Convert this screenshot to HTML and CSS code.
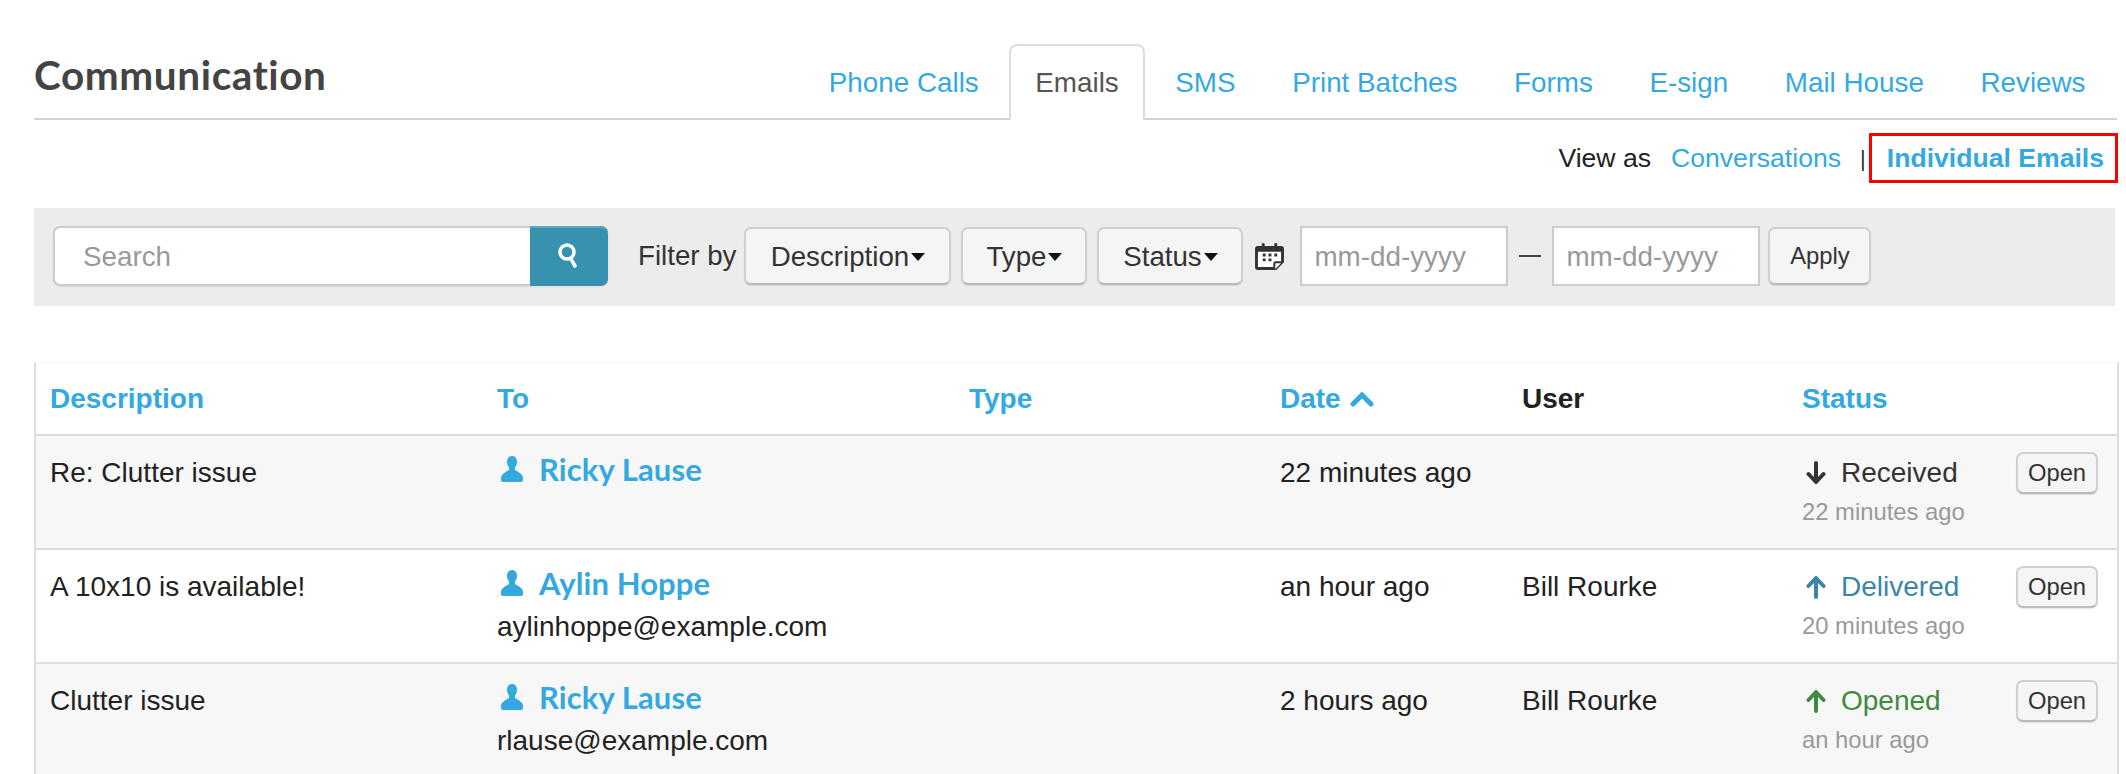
FILE: index.html
```html
<!DOCTYPE html>
<html lang="en">
<head>
<meta charset="utf-8">
<title>Communication</title>
<link rel="stylesheet" href="styles.css">
</head>
<body>
<div class="page">
  <header class="head">
    <h1 class="title">Communication</h1>
    <nav class="tabs">
      <a class="tab">Phone Calls</a>
      <a class="tab tab-active">Emails</a>
      <a class="tab">SMS</a>
      <a class="tab">Print Batches</a>
      <a class="tab">Forms</a>
      <a class="tab">E-sign</a>
      <a class="tab">Mail House</a>
      <a class="tab">Reviews</a>
    </nav>
  </header>

  <div class="view-row">
    <span class="view-label">View as</span>
    <a class="view-link">Conversations</a>
    <span class="view-sep">|</span>
    <a class="view-current">Individual Emails</a>
  </div>

  <div class="filter-bar">
    <div class="search">
      <input class="search-input" type="text" placeholder="Search">
      <button class="search-btn" type="button" aria-label="Search">
        <svg class="search-icon" viewBox="0 0 24 28" width="24" height="28"><circle cx="11" cy="10" r="7" fill="none" stroke="#fff" stroke-width="3.4"/><path d="M15 17l4 7" fill="none" stroke="#fff" stroke-width="3.6" stroke-linecap="round"/></svg>
      </button>
    </div>
    <span class="filter-label">Filter by</span>
    <button class="btn btn-desc" type="button">Description<i class="caret"></i></button>
    <button class="btn btn-type" type="button">Type<i class="caret"></i></button>
    <button class="btn btn-status" type="button">Status<i class="caret"></i></button>
    <svg class="cal-icon" viewBox="0 0 30 28" width="29" height="27">
      <path fill="#333" d="M3 3h4V1.500a1.500 1.500 0 0 1 3 0V3h10V1.500a1.500 1.500 0 0 1 3 0V3h4a3 3 0 0 1 3 3v14l-8 8H3a3 3 0 0 1-3-3V6a3 3 0 0 1 3-3z"/>
      <path fill="#fff" d="M3 9h24v10h-6a2 2 0 0 0-2 2v4H3z"/>
      <path fill="#333" d="M8 11h3v3H8zM14 11h3v3h-3zM20 11h3v3h-3zM8 16h3v3H8zM14 16h3v3h-3z"/>
      <path fill="#fff" d="M21 21h6l-6 6z"/>
    </svg>
    <input class="date-input" type="text" placeholder="mm-dd-yyyy">
    <span class="dash"></span>
    <input class="date-input" type="text" placeholder="mm-dd-yyyy">
    <button class="btn btn-apply" type="button">Apply</button>
  </div>

  <table class="grid">
    <colgroup>
      <col class="c1"><col class="c2"><col class="c3"><col class="c4"><col class="c5"><col class="c6">
    </colgroup>
    <thead>
      <tr>
        <th class="sort">Description</th>
        <th class="sort">To</th>
        <th class="sort">Type</th>
        <th class="sort">Date <svg class="chev" viewBox="0 0 24 16" width="24" height="16"><path d="M3 13l9-9 9 9" fill="none" stroke="#34a9e1" stroke-width="5" stroke-linecap="round"/></svg></th>
        <th>User</th>
        <th class="sort">Status</th>
      </tr>
    </thead>
    <tbody>
      <tr class="odd">
        <td>Re: Clutter issue</td>
        <td>
          <a class="person"><svg class="person-icon" viewBox="0 0 22 26" width="22" height="26"><path fill="#34a9e1" d="M11 0c3.100 0 5 2.400 5 5.800 0 2.500-1 4.600-2 5.800V14c1.500 1.100 3 1.600 4.500 2.700 2.200 1.500 3.500 3 3.500 5.300v2a2 2 0 0 1-2 2H2a2 2 0 0 1-2-2v-2c0-2.300 1.300-3.800 3.500-5.300C5 15.600 6.500 15.100 8 14v-2.400c-1-1.200-2-3.300-2-5.800C6 2.400 7.900 0 11 0z"/></svg><span class="person-name">Ricky Lause</span></a>
        </td>
        <td></td>
        <td>22 minutes ago</td>
        <td></td>
        <td>
          <div class="status-cell">
            <div class="status-text">
              <div class="state state-in"><svg class="arrow" viewBox="0 0 20 24" width="20" height="24"><path d="M10 2v19M2.500 13l7.500 8 7.500-8" fill="none" stroke="currentColor" stroke-width="4" stroke-linecap="round" stroke-linejoin="round"/></svg>Received</div>
              <div class="when">22 minutes ago</div>
            </div>
            <button class="btn btn-open" type="button">Open</button>
          </div>
        </td>
      </tr>
      <tr>
        <td>A 10x10 is available!</td>
        <td>
          <a class="person"><svg class="person-icon" viewBox="0 0 22 26" width="22" height="26"><path fill="#34a9e1" d="M11 0c3.100 0 5 2.400 5 5.800 0 2.500-1 4.600-2 5.800V14c1.500 1.100 3 1.600 4.500 2.700 2.200 1.500 3.500 3 3.500 5.300v2a2 2 0 0 1-2 2H2a2 2 0 0 1-2-2v-2c0-2.300 1.300-3.800 3.500-5.300C5 15.600 6.500 15.100 8 14v-2.400c-1-1.200-2-3.300-2-5.800C6 2.400 7.900 0 11 0z"/></svg><span class="person-name">Aylin Hoppe</span></a>
          <div class="email">aylinhoppe@example.com</div>
        </td>
        <td></td>
        <td>an hour ago</td>
        <td>Bill Rourke</td>
        <td>
          <div class="status-cell">
            <div class="status-text">
              <div class="state state-delivered"><svg class="arrow" viewBox="0 0 20 24" width="20" height="24"><path d="M10 22V3M2.500 11L10 3l7.500 8" fill="none" stroke="currentColor" stroke-width="4" stroke-linecap="round" stroke-linejoin="round"/></svg>Delivered</div>
              <div class="when">20 minutes ago</div>
            </div>
            <button class="btn btn-open" type="button">Open</button>
          </div>
        </td>
      </tr>
      <tr class="odd">
        <td>Clutter issue</td>
        <td>
          <a class="person"><svg class="person-icon" viewBox="0 0 22 26" width="22" height="26"><path fill="#34a9e1" d="M11 0c3.100 0 5 2.400 5 5.800 0 2.500-1 4.600-2 5.800V14c1.500 1.100 3 1.600 4.500 2.700 2.200 1.500 3.500 3 3.500 5.300v2a2 2 0 0 1-2 2H2a2 2 0 0 1-2-2v-2c0-2.300 1.300-3.800 3.500-5.300C5 15.600 6.500 15.100 8 14v-2.400c-1-1.200-2-3.300-2-5.800C6 2.400 7.900 0 11 0z"/></svg><span class="person-name">Ricky Lause</span></a>
          <div class="email">rlause@example.com</div>
        </td>
        <td></td>
        <td>2 hours ago</td>
        <td>Bill Rourke</td>
        <td>
          <div class="status-cell">
            <div class="status-text">
              <div class="state state-opened"><svg class="arrow" viewBox="0 0 20 24" width="20" height="24"><path d="M10 22V3M2.500 11L10 3l7.500 8" fill="none" stroke="currentColor" stroke-width="4" stroke-linecap="round" stroke-linejoin="round"/></svg>Opened</div>
              <div class="when">an hour ago</div>
            </div>
            <button class="btn btn-open" type="button">Open</button>
          </div>
        </td>
      </tr>
    </tbody>
  </table>
</div>
</body>
</html>
```
FILE: styles.css
```css
* { box-sizing: border-box; }
html, body { margin: 0; padding: 0; background: #fff; }
body {
  font-family: "Liberation Sans", Arial, sans-serif;
  font-size: 28px;
  color: #333;
}
a { color: #34a9e1; text-decoration: none; }
.page {
  height: 774px;
  overflow: hidden;
  padding: 0 9px 0 34px;
}

/* Header and tabs */
.head {
  display: flex;
  justify-content: space-between;
  align-items: flex-end;
  height: 120px;
  border-bottom: 2px solid #d2d2d2;
}
.title {
  margin: 0;
  align-self: flex-start;
  padding-top: 53px;
  font-family: Lato, "Liberation Sans", sans-serif;
  font-variant-ligatures: none;
  font-weight: 700;
  font-size: 40.5px;
  letter-spacing: .6px;
  line-height: 44px;
  color: #444;
}
.tabs {
  display: flex;
  gap: 3.6px;
  margin-bottom: -2px;
  padding-right: 5px;
}
.tab {
  display: block;
  height: 76px;
  padding: 0 24.5px;
  border: 2px solid transparent;
  border-bottom: 0;
  font-size: 27.8px;
  line-height: 74px;
}
.tab-active {
  color: #555;
  background: #fff;
  border-color: #ddd;
  border-radius: 8px 8px 0 0;
}

/* View as */
.view-row {
  display: flex;
  justify-content: flex-end;
  align-items: flex-start;
  height: 88px;
  padding-top: 13px;
  margin-right: -1px;
  font-size: 26.6px;
  line-height: 51px;
}
.view-label { margin-right: 20px; color: #222; }
.view-sep { margin: 0 3px 0 19px; font-size: 22px; line-height: 51px; }
.view-current {
  display: block;
  height: 50px;
  padding: 0 11px 0 15px;
  border: 3px solid #f00;
  color: #34a9e1;
  font-weight: 700;
  line-height: 45px;
}

/* Filter bar */
.filter-bar {
  display: flex;
  align-items: center;
  height: 98px;
  padding: 0 19px 2px;
  margin-right: 2px;
  background: #ececec;
  font-size: 27.7px;
}
.search {
  display: flex;
  width: 555px;
  height: 60px;
  flex: none;
  border-radius: 7px;
  box-shadow: 0 1px 2px rgba(0, 0, 0, .08);
}
.search-input {
  flex: 1;
  min-width: 0;
  height: 60px;
  padding: 2px 0 0 28px;
  border: 2px solid #ccc;
  border-right: 0;
  border-radius: 7px 0 0 7px;
  outline: 0;
  background: #fff;
  font: inherit;
  font-size: 27.8px;
}
.search-btn {
  display: flex;
  align-items: center;
  justify-content: center;
  width: 78px;
  height: 60px;
  padding: 0;
  border: 0;
  border-radius: 0 7px 7px 0;
  background: #3792b0;
  box-shadow: inset 0 2px 0 #5ba7c1;
}
.search-icon { flex: none; margin-left: -2px; }
input::placeholder { color: #999; opacity: 1; }

.filter-label { margin-left: 30px; margin-right: 8px; color: #333; }
.btn {
  display: block;
  height: 58px;
  flex: none;
  padding: 2px 0 0;
  border: 2px solid #d0d0d0;
  border-bottom-color: #bbb;
  border-radius: 7px;
  background: #f5f5f5;
  color: #333;
  font: inherit;
  box-shadow: 0 1px 1px rgba(0, 0, 0, .1);
}
.btn-desc { width: 207px; }
.btn-type { width: 126px; margin-left: 10px; }
.btn-status { width: 146px; margin-left: 10px; }
.caret {
  display: inline-block;
  margin-left: 2px;
  vertical-align: 5px;
  border-style: solid;
  border-width: 8px 7.5px 0;
  border-color: #111 transparent transparent;
}
.cal-icon { flex: none; margin-left: 12px; margin-right: 16px; }
.date-input {
  width: 208px;
  height: 60px;
  flex: none;
  padding: 2px 0 0 12px;
  border: 2px solid #ccc;
  outline: 0;
  background: #fff;
  font: inherit;
  font-size: 27.8px;
}
.dash {
  flex: none;
  width: 22px;
  height: 2px;
  margin: 0 11px;
  background: #444;
}
.btn-apply {
  width: 103px;
  margin-left: 8px;
  padding-top: 0;
  font-size: 23.8px;
}

/* Table */
.grid {
  width: 2083px;
  margin-top: 56px;
  table-layout: fixed;
  border-collapse: separate;
  border-spacing: 0;
  border-top: 1px solid #f6f6f6;
  border-left: 2px solid #ddd;
  border-right: 2px solid #ddd;
}
.c1 { width: 447px; }
.c2 { width: 472px; }
.c3 { width: 311px; }
.c4 { width: 242px; }
.c5 { width: 280px; }
.c6 { width: 329px; }
th {
  height: 71px;
  padding: 1px 0 0 14px;
  text-align: left;
  font-weight: 700;
  color: #222;
}
th.sort { color: #34a9e1; }
.chev { margin-left: 2px; vertical-align: 1px; }
td {
  height: 114px;
  padding: 18px 0 0 14px;
  border-top: 2px solid #ddd;
  vertical-align: top;
  line-height: 38px;
  color: #222;
}
.odd td { background: #f7f7f7; }
.person { display: flex; align-items: center; height: 34px; margin-top: -2px; }
.person-icon { flex: none; margin-left: 4px; margin-right: 16px; }
.person-name {
  font-family: Lato, "Liberation Sans", sans-serif;
  font-variant-ligatures: none;
  font-weight: 700;
  font-size: 31px;
  letter-spacing: .1px;
  color: #34a9e1;
}
.email { margin-top: 8px; }
.status-cell { display: flex; justify-content: space-between; padding-right: 19px; }
.status-text { min-width: 0; }
.state { display: flex; align-items: center; height: 38px; }
.arrow { flex: none; margin-left: 4px; margin-right: 15px; }
.state-in { color: #333; }
.state-delivered { color: #3a86a8; }
.state-opened { color: #3f8a3f; }
.when { color: #999; font-size: 23.8px; line-height: 38px; padding-top: 1px; }
.btn-open {
  width: 82px;
  height: 42px;
  margin-top: -2px;
  padding-top: 0;
  font-size: 23.8px;
  line-height: 36px;
}
```
